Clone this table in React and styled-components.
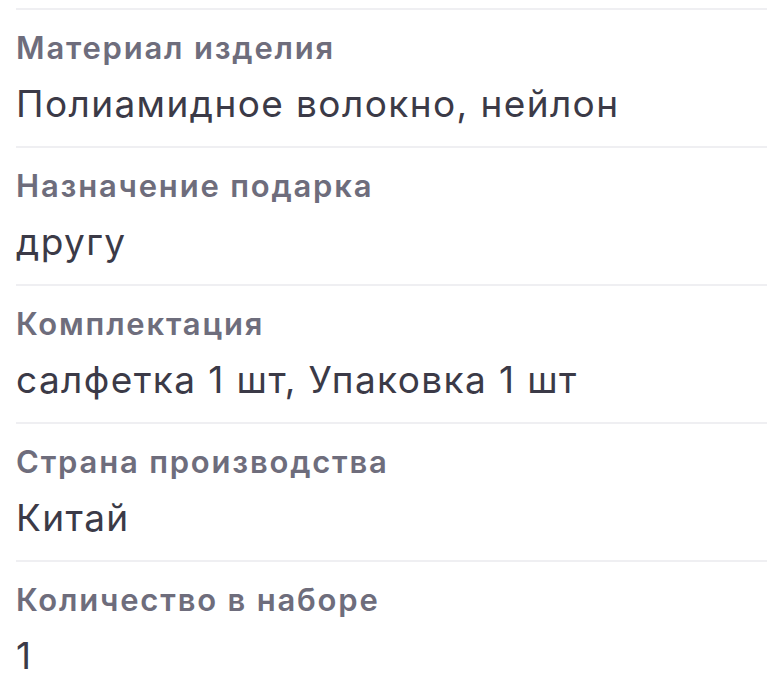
import React from 'react';
import styled, { createGlobalStyle } from 'styled-components';

const GlobalStyle = createGlobalStyle`
  html, body {
    margin: 0;
    padding: 0;
    background: #ffffff;
  }
  body {
    font-family: Inter, "Noto Sans", sans-serif;
    -webkit-font-smoothing: antialiased;
  }
`;

const List = styled.div`
  padding: 8px 16px 0 16px;
`;

const Row = styled.div`
  display: flex;
  flex-direction: column;
  border-top: 2px solid #efeff2;
  padding: 19px 0 20px 0;
`;

const Label = styled.div`
  font-size: 31px;
  line-height: 38px;
  font-weight: 600;
  letter-spacing: 1.8px;
  color: #6e6d7c;
`;

const Value = styled.div`
  margin-top: 15px;
  font-size: 37px;
  line-height: 44px;
  font-weight: 400;
  letter-spacing: 1.4px;
  color: #3b3a47;
`;

const specs = [
  { label: 'Материал изделия', value: 'Полиамидное волокно, нейлон' },
  { label: 'Назначение подарка', value: 'другу' },
  { label: 'Комплектация', value: 'салфетка 1 шт, Упаковка 1 шт' },
  { label: 'Страна производства', value: 'Китай' },
  { label: 'Количество в наборе', value: '1' },
];

export default function App() {
  return (
    <>
      <GlobalStyle />
      <List>
        {specs.map((s) => (
          <Row key={s.label}>
            <Label>{s.label}</Label>
            <Value>{s.value}</Value>
          </Row>
        ))}
      </List>
    </>
  );
}
